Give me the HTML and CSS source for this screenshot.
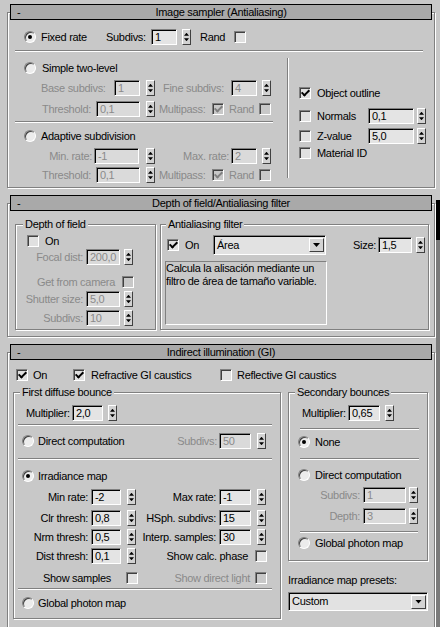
FILE: index.html
```html
<!DOCTYPE html>
<html>
<head>
<meta charset="utf-8">
<link rel="stylesheet" href="styles.css">
</head>
<body>
<div class="screen">
<div class="panel">

<section class="rollout r1">
  <div class="rtitle"><span class="minus">-</span><span class="ttl">Image sampler (Antialiasing)</span><span></span></div>
  <div class="rbody b1">
    <div class="row">
      <span class="radio on ml16"></span>
      <span class="lbl ml5 w65">Fixed rate</span>
      <span class="lbl w45">Subdivs:</span>
      <span class="inp w26">1</span><span class="arr ml5"></span>
      <span class="lbl ml9 w34">Rand</span>
      <span class="cb"></span>
    </div>
    <div class="sep mt5 ml7 w408"></div>
    <div class="cols1">
      <div class="col-l">
        <div class="row mt8"><span class="radio ml16"></span><span class="lbl ml6">Simple two-level</span></div>
        <div class="row mt4 dis">
          <span class="lbl ml33 w73">Base subdivs:</span>
          <span class="inp w26">1</span><span class="arr ml6"></span>
          <span class="lbl ml8 w68">Fine subdivs:</span>
          <span class="inp w26">4</span><span class="arr ml5"></span>
        </div>
        <div class="row mt5 dis">
          <span class="lbl ml34 w54">Threshold:</span>
          <span class="inp w44">0,1</span><span class="arr ml6"></span>
          <span class="lbl ml4 w53">Multipass:</span>
          <span class="cb on"></span>
          <span class="lbl ml5 w30">Rand</span>
          <span class="cb"></span>
        </div>
        <div class="sep mt4 ml7 w258"></div>
        <div class="row mt5"><span class="radio ml16"></span><span class="lbl ml5">Adaptive subdivision</span></div>
        <div class="row mt4 dis">
          <span class="lbl ra2 w86">Min. rate:</span>
          <span class="inp w45">-1</span><span class="arr ml7"></span>
          <span class="lbl ra2 w76">Max. rate:</span>
          <span class="inp w26">2</span><span class="arr ml5"></span>
        </div>
        <div class="row mt3 dis">
          <span class="lbl ml34 w54">Threshold:</span>
          <span class="inp w44">0,1</span><span class="arr ml6"></span>
          <span class="lbl ml4 w53">Multipass:</span>
          <span class="cb on"></span>
          <span class="lbl ml5 w30">Rand</span>
          <span class="cb"></span>
        </div>
      </div>
      <div class="vsep"></div>
      <div class="col-r">
        <div class="row mt33"><span class="cb on ml10"></span><span class="lbl ml6">Object outline</span></div>
        <div class="row mt7"><span class="cb ml10"></span><span class="lbl ml6 w51">Normals</span><span class="inp w46">0,1</span><span class="arr ml3"></span></div>
        <div class="row mt4"><span class="cb ml10"></span><span class="lbl ml6 w51">Z-value</span><span class="inp w46">5,0</span><span class="arr ml3"></span></div>
        <div class="row mt1"><span class="cb ml10"></span><span class="lbl ml6">Material ID</span></div>
      </div>
    </div>
  </div>
</section>

<section class="rollout r2">
  <div class="rtitle"><span class="minus">-</span><span class="ttl">Depth of field/Antialiasing filter</span><span></span></div>
  <div class="rbody b2">
    <div class="groups">
      <div class="group g-dof ml7">
        <span class="glabel ml7">Depth of field</span>
        <div class="row mt2"><span class="cb ml11"></span><span class="lbl ml6">On</span></div>
        <div class="row dis"><span class="lbl ra1 w68">Focal dist:</span><span class="inp ml2 w34">200,0</span><span class="arr ml4"></span></div>
        <div class="row mt9 dis"><span class="lbl ra1 w100">Get from camera</span><span class="cb ml6"></span></div>
        <div class="row mt1 dis"><span class="lbl ra1 w68">Shutter size:</span><span class="inp ml2 w34">5,0</span><span class="arr ml4"></span></div>
        <div class="row mt3 dis"><span class="lbl ra1 w68">Subdivs:</span><span class="inp ml2 w34">10</span><span class="arr ml4"></span></div>
      </div>
      <div class="group g-aa ml4">
        <span class="glabel ml5">Antialiasing filter</span>
        <div class="row h20 mt4">
          <span class="cb on ml6"></span><span class="lbl ml6 w28">On</span>
          <div class="dd w113 h20"><span class="ddt">Área</span><span class="ddb"></span></div>
          <span class="lbl ml27 w25">Size:</span><span class="inp w34">1,5</span><span class="arr ml4"></span>
        </div>
        <div class="desc">Calcula la alisación mediante un<br>filtro de área de tamaño variable.</div>
      </div>
    </div>
  </div>
</section>

<section class="rollout r3">
  <div class="rtitle"><span class="minus">-</span><span class="ttl">Indirect illumination (GI)</span><span></span></div>
  <div class="rbody b3">
    <div class="row mt14">
      <span class="cb on ml8"></span><span class="lbl ml5 w40">On</span>
      <span class="cb on"></span><span class="lbl ml6 w129">Refractive GI caustics</span>
      <span class="cb"></span><span class="lbl ml5">Reflective GI caustics</span>
    </div>
    <div class="groups mt9">
      <div class="group g-fd ml5">
        <span class="glabel ml6">First diffuse bounce</span>
        <div class="row mt6"><span class="lbl ml12 w46">Multiplier:</span><span class="inp w31">2,0</span><span class="arr ml5"></span></div>
        <div class="sep mt3 ml4 w254"></div>
        <div class="row mt7"><span class="radio ml8"></span><span class="lbl ml4 w138">Direct computation</span><span class="lbl ra2 w43 dis">Subdivs:</span><span class="inp w32 dis">50</span><span class="arr ml6"></span></div>
        <div class="sep mt9 ml4 w254"></div>
        <div class="row mt8"><span class="radio on ml8"></span><span class="lbl ml4">Irradiance map</span></div>
        <div class="row mt5"><span class="lbl ra3 w77">Min rate:</span><span class="inp w30">-2</span><span class="arr ml6"></span><span class="lbl ra3 w83">Max rate:</span><span class="inp w32">-1</span><span class="arr ml6"></span></div>
        <div class="row mt5"><span class="lbl ra3 w77">Clr thresh:</span><span class="inp w30">0,8</span><span class="arr ml6"></span><span class="lbl ra3 w83">HSph. subdivs:</span><span class="inp w32">15</span><span class="arr ml6"></span></div>
        <div class="row mt3"><span class="lbl ra3 w77">Nrm thresh:</span><span class="inp w30">0,5</span><span class="arr ml6"></span><span class="lbl ra3 w83">Interp. samples:</span><span class="inp w32">30</span><span class="arr ml6"></span></div>
        <div class="row mt3"><span class="lbl ra3 w77">Dist thresh:</span><span class="inp w30">0,1</span><span class="arr ml6"></span><span class="lbl ra1 w113">Show calc. phase</span><span class="cb ml6"></span></div>
        <div class="row mt6"><span class="lbl ml29 w83">Show samples</span><span class="cb"></span><span class="lbl ra5 w117 dis">Show direct light</span><span class="cb dis"></span></div>
        <div class="sep mt2 ml4 w254"></div>
        <div class="row mt5"><span class="radio ml8"></span><span class="lbl ml4">Global photon map</span></div>
      </div>
      <div class="col3r ml7">
        <div class="group g-sec">
          <span class="glabel ml6">Secondary bounces</span>
          <div class="row mt6"><span class="lbl ml13 w46">Multiplier:</span><span class="inp w32">0,65</span><span class="arr ml5"></span></div>
          <div class="sep mt7 ml11 w119"></div>
          <div class="row mt4"><span class="radio on ml9"></span><span class="lbl ml5">None</span></div>
          <div class="sep mt8 ml11 w119"></div>
          <div class="row mt7"><span class="radio ml9"></span><span class="lbl ml5">Direct computation</span></div>
          <div class="row mt4 dis"><span class="lbl ra3 w74">Subdivs:</span><span class="inp w43">1</span><span class="arr ml3"></span></div>
          <div class="row mt5 dis"><span class="lbl ra3 w74">Depth:</span><span class="inp w43">3</span><span class="arr ml3"></span></div>
          <div class="sep mt7 ml11 w118"></div>
          <div class="row mt2"><span class="radio ml9"></span><span class="lbl ml5">Global photon map</span></div>
        </div>
        <div class="plabel mt13">Irradiance map presets:</div>
        <div class="dd w140 h19 mt5"><span class="ddt">Custom</span><span class="ddb"></span></div>
      </div>
    </div>
  </div>
</section>

</div>
<div class="scroll"><div class="track-top"></div><div class="thumb"></div><div class="track"></div></div>
</div>
</body>
</html>
```

FILE: styles.css
```css
* { box-sizing: border-box; }
html, body { margin: 0; padding: 0; }
body {
  width: 440px; height: 627px; overflow: hidden;
  background: #c8c8c8;
  font-family: "Liberation Sans", Arial, sans-serif;
  font-size: 11px; line-height: 13px; letter-spacing: -0.3px;
  color: #000;
}
.screen { display: flex; width: 440px; height: 627px; overflow: hidden; }
.panel { width: 436px; flex: none; }
.scroll { width: 4px; flex: none; display: flex; flex-direction: column; }
.track-top { height: 200px; background: #c8c8c8; }
.thumb { height: 40px; background: #000; }
.track { flex: 1; background: #7c7c7c; }

/* rollouts */
.rollout { margin-left: 7px; width: 428px; display: flex; flex-direction: column; }
.r1 { margin-top: 4px; }
.r2, .r3 { margin-top: 7px; }
.rtitle {
  position: relative; z-index: 1;
  height: 16px; margin: 0 3px;
  border: 1px solid #000; background: #a9a9a9;
  display: grid; grid-template-columns: 1fr auto 1fr; align-items: center;
  line-height: 14px;
}
.minus { padding-left: 6px; }
.rbody {
  margin-top: -8px;
  border: 1px solid #808080;
  box-shadow: inset 1px 1px 0 #fff, 1px 1px 0 #fff;
  display: flex; flex-direction: column;
}
.b1 { padding: 16px 0 4px; }
.b2 { padding: 20px 0 6px; }
.b3 { padding: 0 0 30px; }

/* generic rows */
.row { display: flex; align-items: center; height: 16px; flex: none; }
.row.h20 { height: 20px; }
.lbl { flex: none; white-space: nowrap; }
.ra1, .ra2, .ra3, .ra5 { text-align: right; }
.ra1 { padding-right: 1px; }
.ra2 { padding-right: 2px; }
.ra3 { padding-right: 3px; }
.ra5 { padding-right: 5px; }
.dis { color: #8a8a8a; }

.sep { height: 2px; flex: none; border-top: 1px solid #808080; border-bottom: 1px solid #fff; }
.vsep { width: 2px; height: 120px; margin-top: 6px; flex: none; border-left: 1px solid #808080; border-right: 1px solid #fff; }

.cols1 { display: flex; align-items: flex-start; }
.col-l { width: 279px; flex: none; display: flex; flex-direction: column; }
.col-r { flex: 1; display: flex; flex-direction: column; }

/* controls */
.inp {
  flex: none; height: 16px;
  border: 1px solid; border-color: #808080 #fff #fff #808080;
  box-shadow: inset 1px 1px 0 #000;
  background: #e4e4e4;
  padding-left: 3px; line-height: 14px; white-space: nowrap; overflow: hidden;
}
.dis .inp, .inp.dis { background: #dadada; }
.arr {
  flex: none; width: 9px; height: 16px;
  border: 1px solid; border-color: #fff #404040 #404040 #fff;
  background: #d2d2d2;
  display: flex; flex-direction: column; align-items: center; justify-content: space-evenly;
}
.arr::before, .arr::after { content: ""; width: 5px; height: 3px; background: #000; }
.arr::before { clip-path: polygon(50% 0, 100% 100%, 0 100%); }
.arr::after { clip-path: polygon(0 0, 100% 0, 50% 100%); }

.cb {
  flex: none; width: 12px; height: 12px;
  border: 1px solid; border-color: #808080 #fff #fff #808080;
  box-shadow: inset 1px 1px 0 #404040;
  background: #e0e0e0;
  display: flex; align-items: center; justify-content: center;
}
.dis .cb, .cb.dis { background: #c8c8c8; }
.cb.on::after {
  content: ""; width: 3px; height: 6px; margin-top: -2px;
  border: solid #000; border-width: 0 2px 2px 0;
  transform: rotate(45deg);
}
.dis .cb.on::after { border-color: #808080; }

.radio {
  flex: none; width: 12px; height: 12px; border-radius: 50%;
  border: 1px solid; border-color: #808080 #fff #fff #808080;
  box-shadow: inset 1px 1px 0 #404040;
  background: #ececec;
  display: flex; align-items: center; justify-content: center;
}
.radio.on::after { content: ""; width: 4px; height: 4px; border-radius: 50%; background: #000; }

.dd {
  flex: none; display: flex; align-items: center;
  border: 1px solid; border-color: #808080 #fff #fff #808080;
  box-shadow: inset 1px 1px 0 #000;
  background: #e2e2e2; padding-left: 3px;
}
.ddt { flex: 1; white-space: nowrap; }
.ddb {
  flex: none; width: 15px; height: 14px; margin-right: 1px;
  border: 1px solid; border-color: #fff #404040 #404040 #fff;
  background: #d4d4d4;
  display: flex; align-items: center; justify-content: center;
}
.ddb::after { content: ""; width: 7px; height: 4px; background: #000; clip-path: polygon(0 0, 100% 0, 50% 100%); }
.dd.h20 { height: 20px; }
.dd.h19 { height: 19px; }

/* groups */
.groups { display: flex; align-items: flex-start; }
.group {
  flex: none; display: flex; flex-direction: column;
  border: 1px solid #808080;
  box-shadow: inset 1px 1px 0 #fff, 1px 1px 0 #fff;
}
.glabel { align-self: flex-start; margin-top: -7px; height: 13px; padding: 0 2px; background: #c8c8c8; white-space: nowrap; flex: none; }
.g-dof { width: 141px; height: 106px; }
.g-aa { width: 269px; height: 106px; }
.g-fd { width: 268px; height: 227px; }
.g-sec { width: 140px; height: 169px; }
.col3r { width: 140px; flex: none; display: flex; flex-direction: column; }
.plabel { white-space: nowrap; }

.desc {
  margin: 6px 0 0 4px; width: 162px; height: 64px; flex: none;
  border: 1px solid; border-color: #808080 #fff #fff #808080;
  line-height: 13px; white-space: nowrap;
}

/* spacing utilities */
.ml2 { margin-left: 2px; } .ml3 { margin-left: 3px; } .ml4 { margin-left: 4px; }
.ml5 { margin-left: 5px; } .ml6 { margin-left: 6px; } .ml7 { margin-left: 7px; }
.ml8 { margin-left: 8px; } .ml9 { margin-left: 9px; } .ml10 { margin-left: 10px; }
.ml11 { margin-left: 11px; } .ml12 { margin-left: 12px; } .ml13 { margin-left: 13px; }
.ml16 { margin-left: 16px; } .ml27 { margin-left: 27px; } .ml29 { margin-left: 29px; }
.ml33 { margin-left: 33px; } .ml34 { margin-left: 34px; }
.mt1 { margin-top: 1px; } .mt2 { margin-top: 2px; } .mt3 { margin-top: 3px; }
.mt4 { margin-top: 4px; } .mt5 { margin-top: 5px; } .mt6 { margin-top: 6px; }
.mt7 { margin-top: 7px; } .mt8 { margin-top: 8px; } .mt9 { margin-top: 9px; }
.mt13 { margin-top: 13px; } .mt14 { margin-top: 14px; } .mt33 { margin-top: 33px; }
.w25 { width: 25px; } .w26 { width: 26px; } .w28 { width: 28px; } .w30 { width: 30px; }
.w31 { width: 31px; } .w32 { width: 32px; } .w34 { width: 34px; } .w40 { width: 40px; }
.w43 { width: 43px; } .w44 { width: 44px; } .w45 { width: 45px; } .w46 { width: 46px; }
.w51 { width: 51px; } .w53 { width: 53px; } .w54 { width: 54px; } .w65 { width: 65px; }
.w68 { width: 68px; } .w73 { width: 73px; } .w74 { width: 74px; } .w76 { width: 76px; }
.w77 { width: 77px; } .w83 { width: 83px; } .w86 { width: 86px; } .w100 { width: 100px; }
.w113 { width: 113px; } .w117 { width: 117px; } .w118 { width: 118px; } .w119 { width: 119px; }
.w129 { width: 129px; } .w138 { width: 138px; } .w140 { width: 140px; }
.w254 { width: 254px; } .w258 { width: 258px; } .w408 { width: 408px; }
```
